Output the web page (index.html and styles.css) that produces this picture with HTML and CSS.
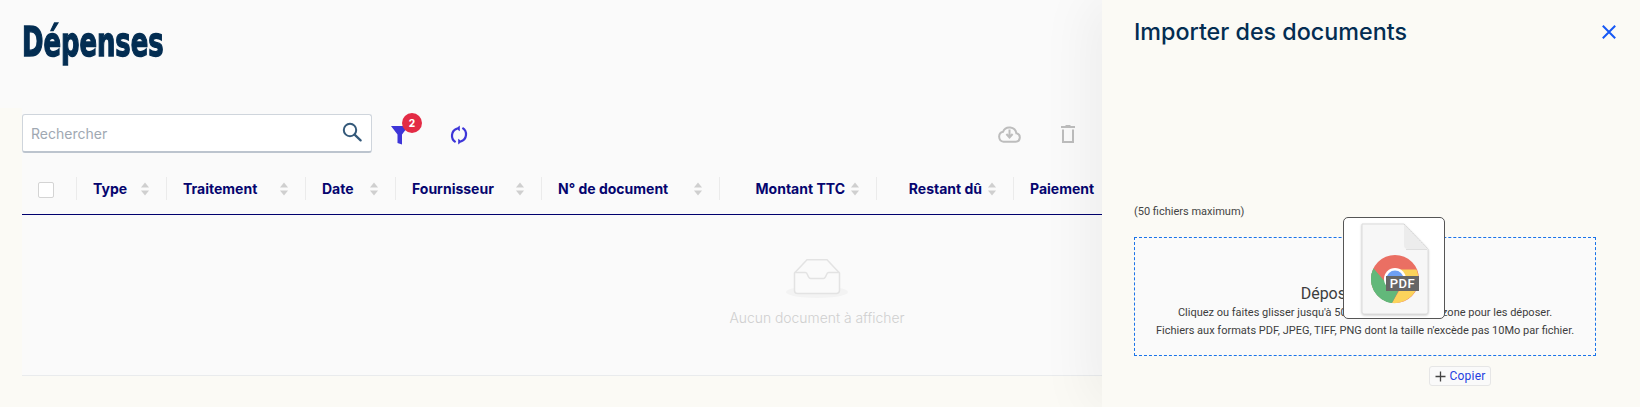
FILE: index.html
```html
<!DOCTYPE html>
<html lang="fr">
<head>
<meta charset="utf-8">
<title>Dépenses</title>
<link rel="stylesheet" href="styles.css">
</head>
<body>
<svg class="defs" width="0" height="0" aria-hidden="true">
  <symbol id="sort" viewBox="0 0 8 14"><path d="M4 0.5 8 5.5H0Z" fill="#cfcfcf"/><path d="M0 8.5H8L4 13.5Z" fill="#cfcfcf"/></symbol>
</svg>
<div class="page">
  <main class="main">
    <header class="head"><h1 class="title">Dépenses</h1></header>
    <div class="content">
      <div class="toolbar">
        <label class="search">
          <span class="placeholder">Rechercher</span>
          <svg class="search-icon" width="20" height="20" viewBox="0 0 20 20" fill="none"><circle cx="8" cy="8" r="6.200" stroke="#34597a" stroke-width="2"/><path d="M12.600 12.600 18.600 18.400" stroke="#34597a" stroke-width="2.200" stroke-linecap="round"/></svg>
        </label>
        <div class="filter">
          <svg width="18" height="19" viewBox="0 0 18 19"><path d="M0 0H17.500L11 8.500V18.500L6.500 17V8.500Z" fill="#3d35d8"/></svg>
          <span class="badge">2</span>
        </div>
        <svg class="refresh" width="18" height="20" viewBox="0 0 18 20" fill="none"><path d="M7 3.600A7.500 7.500 0 0 0 5.600 17.100" stroke="#3d35d8" stroke-width="2.200"/><path d="M11 16.400A7.500 7.500 0 0 0 12.400 2.900" stroke="#3d35d8" stroke-width="2.200"/><path d="M9.800 .4V6.200L6 3.400Z" fill="#3d35d8"/><path d="M8.200 13.800V19.600L12 16.600Z" fill="#3d35d8"/></svg>
        <div class="actions">
          <svg width="23" height="18" viewBox="0 0 23 18" fill="none"><path d="M5.600 16.800H17.600A4.300 4.300 0 0 0 18.400 8.300 7 7 0 0 0 5 6.800 5.100 5.100 0 0 0 5.600 16.800Z" stroke="#bdbdbd" stroke-width="2"/><path d="M11.500 4.500V11.500M8.400 9 11.500 12.400 14.600 9" stroke="#bdbdbd" stroke-width="2"/></svg>
          <svg width="14" height="18" viewBox="0 0 14 18" fill="none"><path d="M0 2H14M4.500 .8H9.500" stroke="#bdbdbd" stroke-width="1.800"/><path d="M2 4.500V17H12V4.500" stroke="#bdbdbd" stroke-width="2"/></svg>
        </div>
      </div>
      <div class="thead">
        <div class="th th-check"><span class="checkbox"></span></div>
        <div class="th w-type"><span class="label">Type</span><svg class="sort"><use href="#sort"/></svg></div>
        <div class="th w-treat"><span class="label">Traitement</span><svg class="sort"><use href="#sort"/></svg></div>
        <div class="th w-date"><span class="label">Date</span><svg class="sort"><use href="#sort"/></svg></div>
        <div class="th w-supplier"><span class="label">Fournisseur</span><svg class="sort"><use href="#sort"/></svg></div>
        <div class="th w-doc"><span class="label">N° de document</span><svg class="sort"><use href="#sort"/></svg></div>
        <div class="th w-amount end"><span class="label">Montant TTC</span><svg class="sort"><use href="#sort"/></svg></div>
        <div class="th w-due end"><span class="label">Restant dû</span><svg class="sort"><use href="#sort"/></svg></div>
        <div class="th w-pay"><span class="label">Paiement</span></div>
      </div>
      <div class="empty">
        <svg class="inbox" width="64" height="40" viewBox="0 0 64 40" fill="none">
          <ellipse cx="32" cy="33" rx="31" ry="6" fill="#f3f3f3"/>
          <path d="M9.500 14 22 .8H42L54.500 14V31.500A3 3 0 0 1 51.500 34.500H12.500A3 3 0 0 1 9.500 31.500Z" stroke="#e3e3e3" stroke-width="1.500" fill="#fafafa"/>
          <path d="M9.500 13.500H20.500C23 13.500 22.500 19.500 25.500 19.500H38.500C41.500 19.500 41 13.500 43.500 13.500H54.500" stroke="#e3e3e3" stroke-width="1.500"/>
        </svg>
        <p class="empty-text">Aucun document à afficher</p>
      </div>
    </div>
  </main>
  <aside class="drawer">
    <div class="drawer-head">
      <h2 class="drawer-title">Importer des documents</h2>
      <svg width="14" height="14" viewBox="0 0 14 14" fill="none"><path d="M.8.8 13.200 13.200M13.200.8.8 13.200" stroke="#1658f5" stroke-width="2"/></svg>
    </div>
    <p class="limit">(50 fichiers maximum)</p>
    <div class="dropzone">
      <p class="drop-title">Déposer un fichier</p>
      <p class="drop-line">Cliquez ou faites glisser jusqu'à 50 fichiers dans cette zone pour les déposer.</p>
      <p class="drop-line">Fichiers aux formats PDF, JPEG, TIFF, PNG dont la taille n'excède pas 10Mo par fichier.</p>
    </div>
    <div class="ghost">
      <svg class="ghost-file" width="70" height="93" viewBox="0 0 70 93">
        <path d="M2 1H44L68 26V89A2 2 0 0 1 66 91H4A2 2 0 0 1 2 89Z" fill="#f7f7f7" stroke="#dcdcdc"/>
        <path d="M44 1 68 26H48A4 4 0 0 1 44 22Z" fill="#ececec"/>
        <path d="M44 1 68 26" stroke="#cfcfcf" stroke-dasharray="1 1.500"/>
        <path d="M46 26.500H67" stroke="#dedede"/>
        <g transform="translate(35 56)">
          <circle r="24" fill="#ea6f63"/>
          <path d="M0-9.500H21.500A24 24 0 0 1-3 24L9 3Z" fill="#fbd35b"/>
          <path d="M-21.500-10.500-9 5-3 24A24 24 0 0 1-21.500-10.500Z" fill="#62b87a"/>
          <path d="M-21.500-10.500A24 24 0 0 0-3 24L5 9-8 5Z" fill="#62b87a"/>
          <circle r="11" fill="#fff"/>
          <circle r="8.500" fill="#6ea0f4"/>
        </g>
      </svg>
      <span class="pdf-tag">PDF</span>
    </div>
    <div class="copy">
      <svg width="11" height="11" viewBox="0 0 11 11" fill="none"><path d="M5.500.5V10.500M.5 5.500H10.500" stroke="#444" stroke-width="1.300"/></svg>
      <span>Copier</span>
    </div>
  </aside>
</div>
</body>
</html>
```
FILE: styles.css
```css
* { box-sizing: border-box; }
html, body { margin: 0; padding: 0; }
body {
  width: 1640px;
  height: 407px;
  overflow: hidden;
  background: #fbfaf5;
  font-family: "Inter", "Liberation Sans", sans-serif;
}
p, h1, h2 { margin: 0; }
.defs { position: absolute; }
.page { display: flex; height: 407px; }

.main { width: 1102px; flex: none; overflow: hidden; }
.head { height: 108px; background: #fafafa; padding: 21px 0 0 22px; }
.title {
  font-family: "DejaVu Sans Condensed", "Liberation Sans", sans-serif;
  font-size: 41px;
  line-height: 42px;
  font-weight: 700;
  color: #032d52;
  -webkit-text-stroke: 1.4px #032d52;
  transform: scaleX(0.7);
  transform-origin: left center;
}
.content { margin-left: 22px; height: 268px; background: #fafafa; border-bottom: 1px solid #e9ebed; }

.toolbar { display: flex; align-items: center; height: 57px; padding: 6px 27px 12px 0; }
.search {
  width: 350px;
  height: 39px;
  display: flex;
  align-items: center;
  justify-content: space-between;
  padding: 0 9px 0 8px;
  background: #fff;
  border: 1px solid #cfd5dc;
  border-bottom: 2px solid #bcc4ce;
  border-radius: 3px;
}
.placeholder { font-size: 14px; color: #a0a8b2; margin-top: 1px; }
.search-icon { margin-top: -2px; }
.filter { position: relative; margin: 3px 0 0 19px; height: 19px; display: flex; }
.badge {
  position: absolute;
  left: 11px;
  top: -13px;
  width: 20px;
  height: 20px;
  border-radius: 50%;
  background: #e32b45;
  color: #fff;
  font-size: 10px;
  font-weight: 800;
  line-height: 20px;
  text-align: center;
}
.refresh { margin: 2px 0 0 41px; }
.actions { margin-left: auto; display: flex; align-items: center; gap: 40px; }

.thead {
  display: grid;
  grid-template-columns: 54px 90px 139px 90px 146px 178px 157px 137px 120px;
  padding: 12px 0 14px;
  border-bottom: 1px solid #00006e;
  height: 50px;
}
.th {
  display: flex;
  align-items: center;
  justify-content: space-between;
  height: 23px;
  padding: 0 17px 0 16px;
  border-left: 1px solid #ebebeb;
}
.th.end { justify-content: flex-end; gap: 6px; }
.th-check { border-left: 0; padding: 0 0 0 16px; justify-content: flex-start; }
.checkbox {
  width: 16px;
  height: 16px;
  background: #fff;
  border: 1px solid #d4d4d4;
  border-radius: 2px;
  margin-top: 2px;
}
.label { font-size: 14px; font-weight: 700; color: #05056f; white-space: nowrap; }
.sort { width: 8px; height: 14px; flex: none; }

.empty { width: 1590px; display: flex; flex-direction: column; align-items: center; padding-top: 44px; }
.empty-text { font-size: 13.9px; line-height: 20px; font-weight: 300; color: #cfcfcf; margin-top: 9px; }

.drawer {
  position: relative;
  width: 538px;
  flex: none;
  background: #fbfaf5;
  box-shadow: -14px 0 50px rgba(0, 0, 0, 0.05);
  padding: 0 24px 0 32px;
}
.drawer-head { display: flex; align-items: center; justify-content: space-between; height: 64px; }
.drawer-title { font-size: 23.3px; line-height: 32px; font-weight: 500; color: #032d52; }
.limit { font-family: "Roboto", sans-serif; font-size: 11px; line-height: 16px; color: #444; margin-top: 140px; }
.dropzone {
  width: 462px;
  height: 119px;
  margin-top: 17px;
  padding-top: 46px;
  background: #fafafa;
  border: 1px dashed #1a73e8;
  font-family: "Roboto", sans-serif;
  text-align: center;
  color: #3d3d3d;
}
.drop-title { font-size: 16px; line-height: 20px; }
.drop-line { font-size: 11px; line-height: 18px; }

.ghost {
  position: absolute;
  left: 241px;
  top: 217px;
  width: 102px;
  height: 102px;
  background: #fff;
  border: 1px solid #555;
  border-radius: 5px;
  overflow: hidden;
}
.ghost-file { position: absolute; left: 16px; top: 5px; filter: drop-shadow(0 1px 1px rgba(0, 0, 0, 0.2)); }
.pdf-tag {
  position: absolute;
  left: 42px;
  top: 58px;
  width: 33px;
  height: 15px;
  background: #666;
  color: #fff;
  font-family: "Roboto", sans-serif;
  font-size: 13px;
  font-weight: 500;
  line-height: 15px;
  letter-spacing: 0.5px;
  text-align: center;
}
.copy {
  position: absolute;
  left: 327px;
  top: 366px;
  width: 62px;
  height: 20px;
  display: flex;
  align-items: center;
  justify-content: center;
  gap: 4px;
  background: #fafafa;
  border: 1px solid #e6e6e6;
  border-radius: 3px;
  font-family: "Roboto", sans-serif;
  font-size: 12px;
  letter-spacing: 0.2px;
  color: #2540e0;
}
```
